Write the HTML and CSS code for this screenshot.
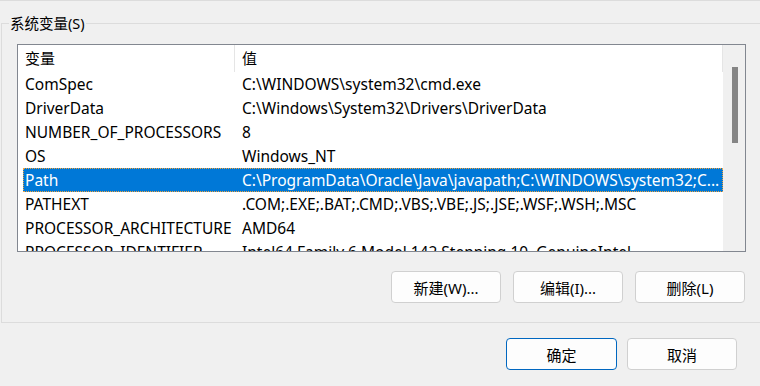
FILE: index.html
```html
<!DOCTYPE html>
<html lang="zh-CN">
<head>
    <meta charset="UTF-8">
    <meta name="viewport" content="width=device-width, initial-scale=1.0">
    <title>系统变量</title>
    <link rel="stylesheet" href="styles.css">
</head>

<body>
    <div class="top-line"></div>

    <fieldset class="group">
        <legend class="group-title">系统变量(S)</legend>

        <div class="list">
            <div class="list-body">
                <div class="row head">
                    <div class="cell name">变量</div>
                    <div class="cell value">值</div>
                </div>
                <div class="row">
                    <div class="cell name">ComSpec</div>
                    <div class="cell value">C:\WINDOWS\system32\cmd.exe</div>
                </div>
                <div class="row">
                    <div class="cell name">DriverData</div>
                    <div class="cell value">C:\Windows\System32\Drivers\DriverData</div>
                </div>
                <div class="row">
                    <div class="cell name">NUMBER_OF_PROCESSORS</div>
                    <div class="cell value">8</div>
                </div>
                <div class="row">
                    <div class="cell name">OS</div>
                    <div class="cell value">Windows_NT</div>
                </div>
                <div class="row selected">
                    <div class="cell name">Path</div>
                    <div class="cell value">C:\ProgramData\Oracle\Java\javapath;C:\WINDOWS\system32;C...</div>
                </div>
                <div class="row">
                    <div class="cell name">PATHEXT</div>
                    <div class="cell value">.COM;.EXE;.BAT;.CMD;.VBS;.VBE;.JS;.JSE;.WSF;.WSH;.MSC</div>
                </div>
                <div class="row">
                    <div class="cell name">PROCESSOR_ARCHITECTURE</div>
                    <div class="cell value">AMD64</div>
                </div>
                <div class="row">
                    <div class="cell name">PROCESSOR_IDENTIFIER</div>
                    <div class="cell value">Intel64 Family 6 Model 142 Stepping 10, GenuineIntel</div>
                </div>
            </div>
            <div class="scrollbar">
                <div class="thumb"></div>
            </div>
        </div>

        <div class="actions">
            <button class="btn">新建(W)...</button>
            <button class="btn">编辑(I)...</button>
            <button class="btn">删除(L)</button>
        </div>
    </fieldset>

    <div class="footer">
        <button class="btn default">确定</button>
        <button class="btn">取消</button>
    </div>
</body>
</html>
```

FILE: styles.css
```css
body {
    margin: 0;
    width: 760px;
    height: 386px;
    overflow: hidden;
    background-color: #f0f0f0;
    font-family: "Noto Sans", "Noto Sans CJK SC", sans-serif;
    font-size: 15px;
    color: #000;
}

.top-line {
    height: 1px;
    background-color: #dcdcdc;
}

/* group box */
.group {
    margin: 14px 0 0 1px;
    padding: 13px 0 0 0;
    width: 790px;
    height: 293px;
    border: 1px solid #dcdcdc;
    box-sizing: content-box;
}

.group-title {
    margin-left: 7px;
    padding: 0 1px;
    font-size: 14.5px;
    line-height: 16px;
}

/* list view */
.list {
    display: flex;
    margin-left: 15px;
    width: 727px;
    height: 206px;
    border: 1px solid #828790;
    background-color: white;
}

.list-body {
    width: 705px;
    overflow: hidden;
    font-size: 15.5px;
}

.row {
    display: grid;
    grid-template-columns: 217px 1fr;
    height: 24px;
    align-items: center;
    white-space: nowrap;
}

.row.head {
    height: 27px;
}

.cell {
    padding-left: 7px;
    overflow: hidden;
    line-height: 24px;
}

.head .cell {
    height: 27px;
    line-height: 27px;
    font-size: 15px;
}

.head .name {
    border-right: 1px solid #e5e5e5;
}

.head .value {
    padding-left: 6px;
    border-right: 1px solid #e5e5e5;
}

.row .value {
    padding-left: 7px;
}

.selected {
    margin-left: 5px;
    background-color: #0078d7;
    color: white;
    outline: 1px dotted #f3a33b;
    outline-offset: -1px;
    grid-template-columns: 212px 1fr;
}

.selected .name {
    padding-left: 2px;
}

.scrollbar {
    width: 22px;
    background-color: #f0f0f0;
    padding-top: 22px;
    display: flex;
    justify-content: center;
}

.thumb {
    width: 6px;
    height: 76px;
    margin-left: 2px;
    background-color: #858585;
}

/* buttons */
.actions {
    display: flex;
    gap: 12px;
    margin: 19px 0 0 389px;
}

.btn {
    width: 110px;
    height: 32px;
    padding: 0;
    border: 1px solid #d0d0d0;
    border-radius: 4px;
    background-color: #fdfdfd;
    font-family: inherit;
    font-size: 15px;
    color: #000;
}

.footer {
    display: flex;
    gap: 10px;
    margin: 15px 0 0 506px;
}

.btn.default {
    width: 111px;
    border-color: #0067c0;
}
```
